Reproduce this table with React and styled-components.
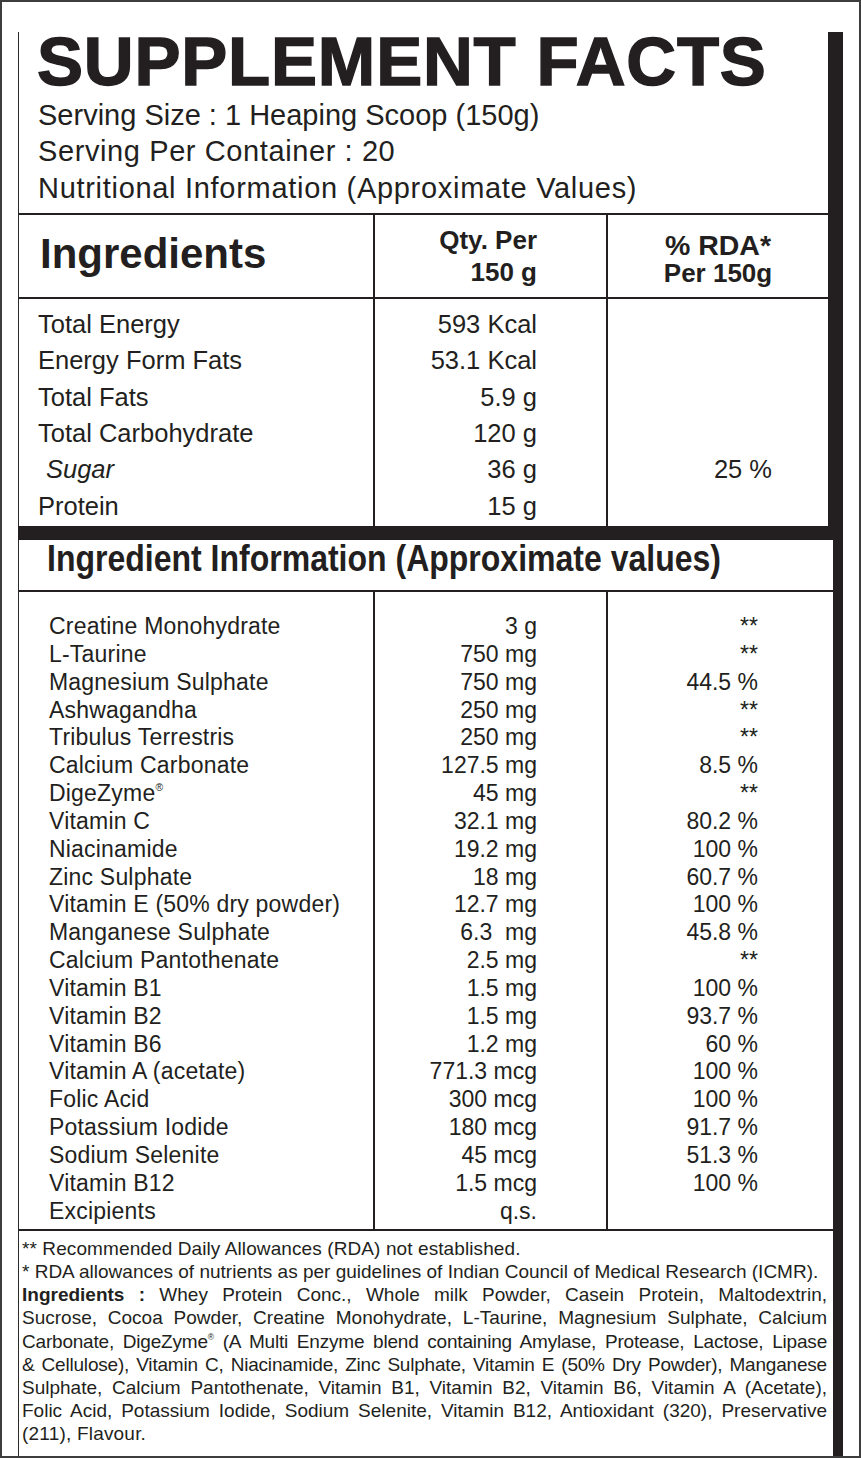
import React from "react";
import styled, { createGlobalStyle } from "styled-components";

const INK = "#231f20";

const GlobalStyle = createGlobalStyle`
  html, body { margin: 0; padding: 0; background: #fff; }
  body {
    font-family: "Liberation Sans", Arial, Helvetica, sans-serif;
    color: ${INK};
  }
`;

const Frame = styled.div`
  width: 861px;
  height: 1458px;
  box-sizing: border-box;
  border: 2px solid #3d3d3d;
  padding: 30px 0 0 16px;
  display: flex;
  flex-direction: column;
  overflow: hidden;
`;

const Label = styled.div`
  width: 825px;
  flex: 1;
  box-sizing: border-box;
  border-left: 1px solid #2a2a2a;
  border-right: 10px solid ${INK};
  display: flex;
  flex-direction: column;
`;

const TopSection = styled.section`
  border-right: 5px solid ${INK};
`;

const Title = styled.h1`
  margin: 0;
  padding-left: 18px;
  font-size: 69px;
  line-height: 60px;
  font-weight: 700;
  letter-spacing: 0.8px;
  -webkit-text-stroke: 1.4px ${INK};
  white-space: nowrap;
`;

const ServingBlock = styled.div`
  padding: 4.7px 0 6.8px 19px;
`;

const ServingLine = styled.div`
  font-size: 29px;
  line-height: 36.5px;
  letter-spacing: ${(p) => p.$ls || 0}px;
  white-space: nowrap;
`;

const Grid = styled.div`
  display: grid;
  grid-template-columns: 354px 233px 1fr;
  border-top: ${(p) => (p.$top ? `2px solid ${INK}` : "none")};
  border-bottom: ${(p) => (p.$open ? "none" : `2px solid ${INK}`)};
  height: ${(p) => p.$height}px;
`;

const HeadCell = styled.div`
  border-left: ${(p) => (p.$divider ? `2px solid ${INK}` : "none")};
  text-align: ${(p) => p.$align || "left"};
  padding: ${(p) => p.$pad || "0"};
  font-weight: 700;
  white-space: nowrap;
`;

const IngredientsHead = styled.div`
  font-size: 42px;
  line-height: 78px;
`;

const HeadLine = styled.div`
  font-size: ${(p) => p.$size}px;
  line-height: ${(p) => p.$lh}px;
`;

const Column = styled.div`
  border-left: ${(p) => (p.$divider ? `2px solid ${INK}` : "none")};
  padding: ${(p) => p.$pad};
  text-align: ${(p) => p.$align || "left"};
  white-space: nowrap;
`;

const Cell = styled.div`
  height: ${(p) => p.$h}px;
  line-height: ${(p) => p.$h}px;
  font-size: ${(p) => p.$size}px;
  letter-spacing: ${(p) => p.$ls || 0}px;
  font-style: ${(p) => (p.$italic ? "italic" : "normal")};
  padding-left: ${(p) => p.$indent || 0}px;
`;

const Reg = styled.sup`
  font-size: 0.45em;
  line-height: 0;
  vertical-align: 0.95em;
`;

const Bar = styled.div`
  height: 14px;
  background: ${INK};
  margin-left: -1px;
`;

const Heading = styled.div`
  height: 38px;
  padding: 0 0 12px 28px;
  border-bottom: 2px solid ${INK};
  white-space: nowrap;
`;

const HeadingText = styled.span`
  display: inline-block;
  font-size: 37px;
  line-height: 38px;
  font-weight: 700;
  transform: scaleX(0.865);
  transform-origin: left center;
`;

const Footer = styled.div`
  padding: 5.8px 6px 0 3px;
  font-size: 19px;
  line-height: 23.2px;
`;

const FootLine = styled.div`
  white-space: ${(p) => (p.$justify ? "normal" : "nowrap")};
  text-align: ${(p) => (p.$justify ? "justify" : "left")};
  text-align-last: ${(p) => (p.$justify ? "justify" : "auto")};
  letter-spacing: ${(p) => p.$ls || 0}px;
`;

const Bold = styled.b`
  font-weight: 700;
`;

const nutrition = [
  { name: "Total Energy", qty: "593 Kcal" },
  { name: "Energy Form Fats", qty: "53.1 Kcal" },
  { name: "Total Fats", qty: "5.9 g" },
  { name: "Total Carbohydrate", qty: "120 g" },
  { name: "Sugar", qty: "36 g", rda: "25 %", sub: true },
  { name: "Protein", qty: "15 g" },
];

const ingredients = [
  ["Creatine Monohydrate", "3 g", "**"],
  ["L-Taurine", "750 mg", "**"],
  ["Magnesium Sulphate", "750 mg", "44.5 %"],
  ["Ashwagandha", "250 mg", "**"],
  ["Tribulus Terrestris", "250 mg", "**"],
  ["Calcium Carbonate", "127.5 mg", "8.5 %"],
  ["DigeZyme", "45 mg", "**", true],
  ["Vitamin C", "32.1 mg", "80.2 %"],
  ["Niacinamide", "19.2 mg", "100 %"],
  ["Zinc Sulphate", "18 mg", "60.7 %"],
  ["Vitamin E (50% dry powder)", "12.7 mg", "100 %"],
  ["Manganese Sulphate", "6.3\u00a0 mg", "45.8 %"],
  ["Calcium Pantothenate", "2.5 mg", "**"],
  ["Vitamin B1", "1.5 mg", "100 %"],
  ["Vitamin B2", "1.5 mg", "93.7 %"],
  ["Vitamin B6", "1.2 mg", "60 %"],
  ["Vitamin A (acetate)", "771.3 mcg", "100 %"],
  ["Folic Acid", "300 mcg", "100 %"],
  ["Potassium Iodide", "180 mcg", "91.7 %"],
  ["Sodium Selenite", "45 mcg", "51.3 %"],
  ["Vitamin B12", "1.5 mcg", "100 %"],
  ["Excipients", "q.s.", ""],
];

const ROW1 = 36.4;
const ROW2 = 27.85;

export default function App() {
  return (
    <>
      <GlobalStyle />
      <Frame>
        <Label>
          <TopSection>
            <Title>SUPPLEMENT FACTS</Title>
            <ServingBlock>
              <ServingLine>Serving Size : 1 Heaping Scoop (150g)</ServingLine>
              <ServingLine $ls={0.6}>Serving Per Container : 20</ServingLine>
              <ServingLine $ls={0.7}>Nutritional Information (Approximate Values)</ServingLine>
            </ServingBlock>
            <Grid $top $height={82}>
              <HeadCell $pad="0 0 4px 21px">
                <IngredientsHead>Ingredients</IngredientsHead>
              </HeadCell>
              <HeadCell $divider $align="right" $pad="9px 69px 0 0">
                <HeadLine $size={26} $lh={32}>Qty. Per</HeadLine>
                <HeadLine $size={26} $lh={32}>150 g</HeadLine>
              </HeadCell>
              <HeadCell $divider $align="center" $pad="16px 0 0 0">
                <HeadLine $size={28.5} $lh={28}>% RDA*</HeadLine>
                <HeadLine $size={26} $lh={28}>Per 150g</HeadLine>
              </HeadCell>
            </Grid>
            <Grid $open $height={227}>
              <Column $pad="6.8px 0 0 19px">
                {nutrition.map((r) => (
                  <Cell key={r.name} $h={ROW1} $size={25.5} $italic={r.sub} $indent={r.sub ? 8 : 0}>
                    {r.name}
                  </Cell>
                ))}
              </Column>
              <Column $divider $align="right" $pad="6.8px 69px 0 0">
                {nutrition.map((r) => (
                  <Cell key={r.name} $h={ROW1} $size={25.5}>
                    {r.qty}
                  </Cell>
                ))}
              </Column>
              <Column $divider $align="right" $pad="6.8px 56px 0 0">
                {nutrition.map((r) => (
                  <Cell key={r.name} $h={ROW1} $size={25.5}>
                    {r.rda || ""}
                  </Cell>
                ))}
              </Column>
            </Grid>
          </TopSection>
          <Bar />
          <Heading>
            <HeadingText>Ingredient Information (Approximate values)</HeadingText>
          </Heading>
          <Grid $height={637}>
            <Column $pad="21px 0 0 30px">
              {ingredients.map((r) => (
                <Cell key={r[0]} $h={ROW2} $size={23} $ls={0.2}>
                  {r[0]}
                  {r[3] && <Reg>®</Reg>}
                </Cell>
              ))}
            </Column>
            <Column $divider $align="right" $pad="21px 69px 0 0">
              {ingredients.map((r) => (
                <Cell key={r[0]} $h={ROW2} $size={23}>
                  {r[1]}
                </Cell>
              ))}
            </Column>
            <Column $divider $align="right" $pad="21px 75px 0 0">
              {ingredients.map((r) => (
                <Cell key={r[0]} $h={ROW2} $size={23}>
                  {r[2]}
                </Cell>
              ))}
            </Column>
          </Grid>
          <Footer>
            <FootLine $ls={0.1}>** Recommended Daily Allowances (RDA) not established.</FootLine>
            <FootLine>
              * RDA allowances of nutrients as per guidelines of Indian Council of Medical Research (ICMR).
            </FootLine>
            <FootLine $justify>
              <Bold>Ingredients :</Bold> Whey Protein Conc., Whole milk Powder, Casein Protein, Maltodextrin,
            </FootLine>
            <FootLine $justify>
              Sucrose, Cocoa Powder, Creatine Monohydrate, L-Taurine, Magnesium Sulphate, Calcium
            </FootLine>
            <FootLine $justify $ls={-0.2}>
              Carbonate, DigeZyme<Reg>®</Reg> (A Multi Enzyme blend containing Amylase, Protease, Lactose, Lipase
            </FootLine>
            <FootLine $justify $ls={-0.2}>
              &amp; Cellulose), Vitamin C, Niacinamide, Zinc Sulphate, Vitamin E (50% Dry Powder), Manganese
            </FootLine>
            <FootLine $justify>
              Sulphate, Calcium Pantothenate, Vitamin B1, Vitamin B2, Vitamin B6, Vitamin A (Acetate),
            </FootLine>
            <FootLine $justify>
              Folic Acid, Potassium Iodide, Sodium Selenite, Vitamin B12, Antioxidant (320), Preservative
            </FootLine>
            <FootLine $ls={0.2}>(211), Flavour.</FootLine>
          </Footer>
        </Label>
      </Frame>
    </>
  );
}
